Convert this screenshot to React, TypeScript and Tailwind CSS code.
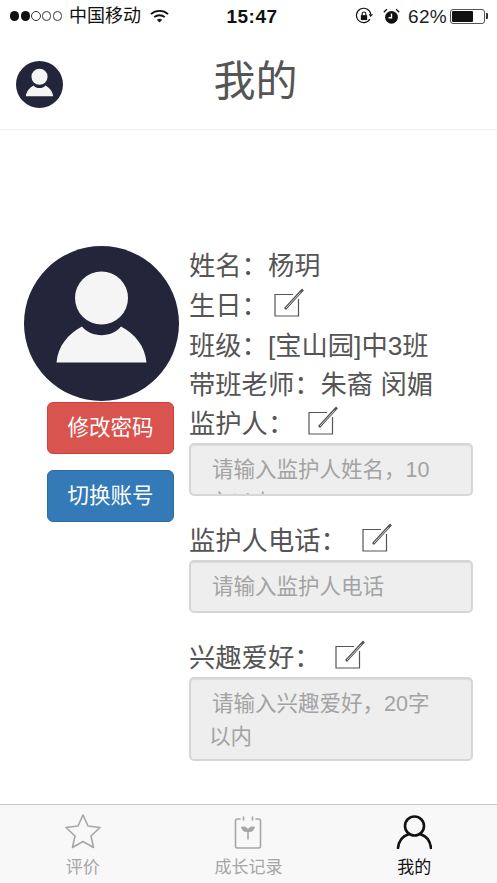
import React from "react";

const FONT = "font-['Liberation_Sans','Noto_Sans_CJK_SC',sans-serif]";

// full-width punctuation
const COLON = "\uFF1A";
const COMMA = "\uFF0C";

function Avatar({ className }: { className: string }) {
  return (
    <svg viewBox="0 0 155 155" className={className}>
      <circle cx="77.5" cy="77.5" r="77.5" fill="#23263a" />
      <circle cx="77.5" cy="52" r="26.5" fill="#f5f5f5" />
      <path
        d="M32.5 116.5C34 100 44 88 58 80.5C67 92 88 92 97 80.5C111 88 121 100 122.5 116.5Z"
        fill="#f5f5f5"
      />
    </svg>
  );
}

function EditIcon({ className = "" }: { className?: string }) {
  return (
    <svg viewBox="0 0 30 30" className={`w-[30px] h-[30px] shrink-0 ${className}`} fill="none">
      <path d="M19 6.5H1V28H24.5V11" stroke="#555" strokeWidth="1.2" />
      <path d="M11 21L27 3.5L29 1.5" stroke="#555" strokeWidth="2.6" />
      <path d="M12 20L26.5 4.5" stroke="#eee" strokeWidth="0.8" />
    </svg>
  );
}

function StatusBar() {
  return (
    <div className="h-[32px] grid grid-cols-[1fr_auto_1fr] items-center pl-[10px] pr-[9px] text-[#111]">
      <div className="flex items-center">
        <div className="flex gap-[1.5px]">
          <span className="w-[9.2px] h-[9.2px] rounded-full bg-[#111]" />
          <span className="w-[9.2px] h-[9.2px] rounded-full bg-[#111]" />
          <span className="w-[9.2px] h-[9.2px] rounded-full border border-[#333]" />
          <span className="w-[9.2px] h-[9.2px] rounded-full border border-[#333]" />
          <span className="w-[9.2px] h-[9.2px] rounded-full border border-[#333]" />
        </div>
        <span className="ml-[7px] text-[18px] leading-none">中国移动</span>
        <svg viewBox="0 0 20 14" className="w-[19px] h-[14px] ml-[9px]" fill="none" stroke="#111">
          <path d="M1 5C6 0.5 14 0.5 19 5" strokeWidth="2" />
          <path d="M4.5 8.2C7.5 5.6 12.5 5.6 15.5 8.2" strokeWidth="2" />
          <path d="M7.5 11C9 10 11 10 12.5 11L10 13.5Z" fill="#111" strokeWidth="0.5" />
        </svg>
      </div>
      <span className="text-[19px] font-bold leading-none tracking-[0.5px] ml-[6px]">15:47</span>
      <div className="flex items-center justify-end">
        <svg viewBox="0 0 20 20" className="w-[18px] h-[18px]" fill="none">
          <path d="M16.5 13.5A8 8 0 1 1 17.5 8" stroke="#111" strokeWidth="1.3" />
          <path d="M15 8H20L17.5 11Z" fill="#111" />
          <rect x="6.5" y="9" width="7" height="5.5" fill="#111" />
          <path d="M8 9V7.5A2 2 0 0 1 12 7.5V9" stroke="#111" strokeWidth="1.2" />
        </svg>
        <svg viewBox="0 0 20 20" className="w-[17px] h-[17px] ml-[10px]">
          <circle cx="10" cy="11" r="7.5" fill="#111" />
          <path d="M10 6.5V11.5H6.5" stroke="#fff" strokeWidth="1.6" fill="none" />
          <path d="M1 5L4.5 1.5M19 5L15.5 1.5" stroke="#111" strokeWidth="1.6" />
        </svg>
        <span className="ml-[8px] text-[19px] leading-none tracking-[0.3px] text-[#222]">62%</span>
        <div className="ml-[3px] w-[35px] h-[15px] border border-[#555] rounded-[3px] p-[1px]">
          <div className="w-[21px] h-full bg-[#111] rounded-[1px]" />
        </div>
        <span className="ml-[1px] w-[2px] h-[6px] bg-[#333] rounded-r-[1px]" />
      </div>
    </div>
  );
}

function Field({
  label,
  iconGap,
  placeholder,
  boxHeight,
}: {
  label: string;
  iconGap: string;
  placeholder: string;
  boxHeight: string;
}) {
  return (
    <div className="mb-[25px]">
      <div className="h-[39px] pt-[2px] flex items-center">
        {label}
        <EditIcon className={`${iconGap} -translate-y-[4px]`} />
      </div>
      <textarea
        disabled
        placeholder={placeholder}
        className={`block w-[284px] ${boxHeight} resize-none overflow-hidden rounded-[5px] border-2 border-[#d6d6d6] bg-[#eeeeee] shadow-[inset_0_1px_1px_rgba(0,0,0,.075)] pt-[9px] pl-[18px] pr-[24px] indent-[3px] text-[21.5px] leading-[33px] placeholder:text-[#a3a3a3]`}
      />
    </div>
  );
}

export default function App() {
  return (
    <div className={`w-[497px] h-[883px] flex flex-col bg-white overflow-hidden ${FONT}`}>
      <StatusBar />

      <header className="h-[98px] border-b border-[#eeeeee] grid grid-cols-[1fr_auto_1fr] items-center pl-[16px] pt-[8px]">
        <Avatar className="w-[47px] h-[47px]" />
        <h1 className="text-[42px] leading-none text-[#555] -translate-x-[1px] -translate-y-[3px]">我的</h1>
        <div />
      </header>

      <main className="flex-1 flex pt-[116px]">
        <div className="w-[189px] shrink-0 pl-[23.5px]">
          <Avatar className="w-[155px] h-[155px]" />
          <div className="ml-[23.5px] mt-[1px] w-[127px] flex flex-col gap-[16px]">
            <button className="h-[52px] rounded-[6px] border border-[#d43f3a] bg-[#d9534f] text-white text-[21.5px]">
              修改密码
            </button>
            <button className="h-[52px] rounded-[6px] border border-[#2e6da4] bg-[#337ab7] text-white text-[21.5px]">
              切换账号
            </button>
          </div>
        </div>

        <div className="flex-1 text-[26.3px] text-[#555]">
          <div className="h-[40px] pt-[2px] flex items-center">{`姓名${COLON}杨玥`}</div>
          <div className="h-[40px] pt-[2px] flex items-center">
            {`生日${COLON}`}
            <EditIcon className="ml-[6px] -translate-y-[4px]" />
          </div>
          <div className="h-[40px] pt-[2px] flex items-center">{`班级${COLON}[宝山园]中3班`}</div>
          <div className="h-[38px] pt-[2px] flex items-center">{`带班老师${COLON}朱裔 闵媚`}</div>
          <Field
            label={`监护人${COLON}`}
            iconGap="ml-[14px]"
            placeholder={`请输入监护人姓名${COMMA}10字以内`}
            boxHeight="h-[53px]"
          />
          <Field
            label={`监护人电话${COLON}`}
            iconGap="ml-[15px]"
            placeholder="请输入监护人电话"
            boxHeight="h-[53px]"
          />
          <Field
            label={`兴趣爱好${COLON}`}
            iconGap="ml-[15px]"
            placeholder={`请输入兴趣爱好${COMMA}20字以内`}
            boxHeight="h-[84px]"
          />
        </div>
      </main>

      <nav className="h-[79px] border-t border-[#c8c8c8] bg-[#f8f8f8] grid grid-cols-3">
        <div className="flex flex-col items-center pt-[8px] text-[#a6a6a6]">
          <svg viewBox="0 0 36 36" className="w-[36px] h-[36px]" fill="none" stroke="#a6a6a6" strokeWidth="1.6" strokeLinejoin="round">
            <path d="M18 2L23 13L35 14.5L26 23L28.5 34.5L18 28.5L7.5 34.5L10 23L1 14.5L13 13Z" />
          </svg>
          <span className="text-[17px] leading-none mt-[10px]">评价</span>
        </div>
        <div className="flex flex-col items-center pt-[8px] text-[#a6a6a6]">
          <svg viewBox="0 0 36 36" className="w-[36px] h-[36px]" fill="none" stroke="#a6a6a6" strokeWidth="1.6" strokeLinecap="round">
            <path d="M10 6H7.5A2 2 0 0 0 5.5 8V33A2 2 0 0 0 7.5 35H28.5A2 2 0 0 0 30.5 33V8A2 2 0 0 0 28.5 6H26" />
            <path d="M13.5 4V7M22.5 4V7M18 26V18" />
            <path d="M18 18C16.5 14.5 14 14 12 14.5C13 17.5 15.5 18.5 18 18Z" fill="#a6a6a6" />
            <path d="M18 18C19.5 14.5 22 14 24 14.5C23 17.5 20.5 18.5 18 18Z" fill="#a6a6a6" />
          </svg>
          <span className="text-[17px] leading-none mt-[10px]">成长记录</span>
        </div>
        <div className="flex flex-col items-center pt-[8px] text-[#111]">
          <svg viewBox="0 0 36 36" className="w-[36px] h-[36px]" fill="none" stroke="#111" strokeWidth="2.6" strokeLinecap="round">
            <circle cx="18.5" cy="13" r="9.5" />
            <path d="M2 35C3 27 7 23 12 21.5M35 35C34 27 30 23 25 21.5" />
          </svg>
          <span className="text-[17px] leading-none mt-[10px]">我的</span>
        </div>
      </nav>
    </div>
  );
}
